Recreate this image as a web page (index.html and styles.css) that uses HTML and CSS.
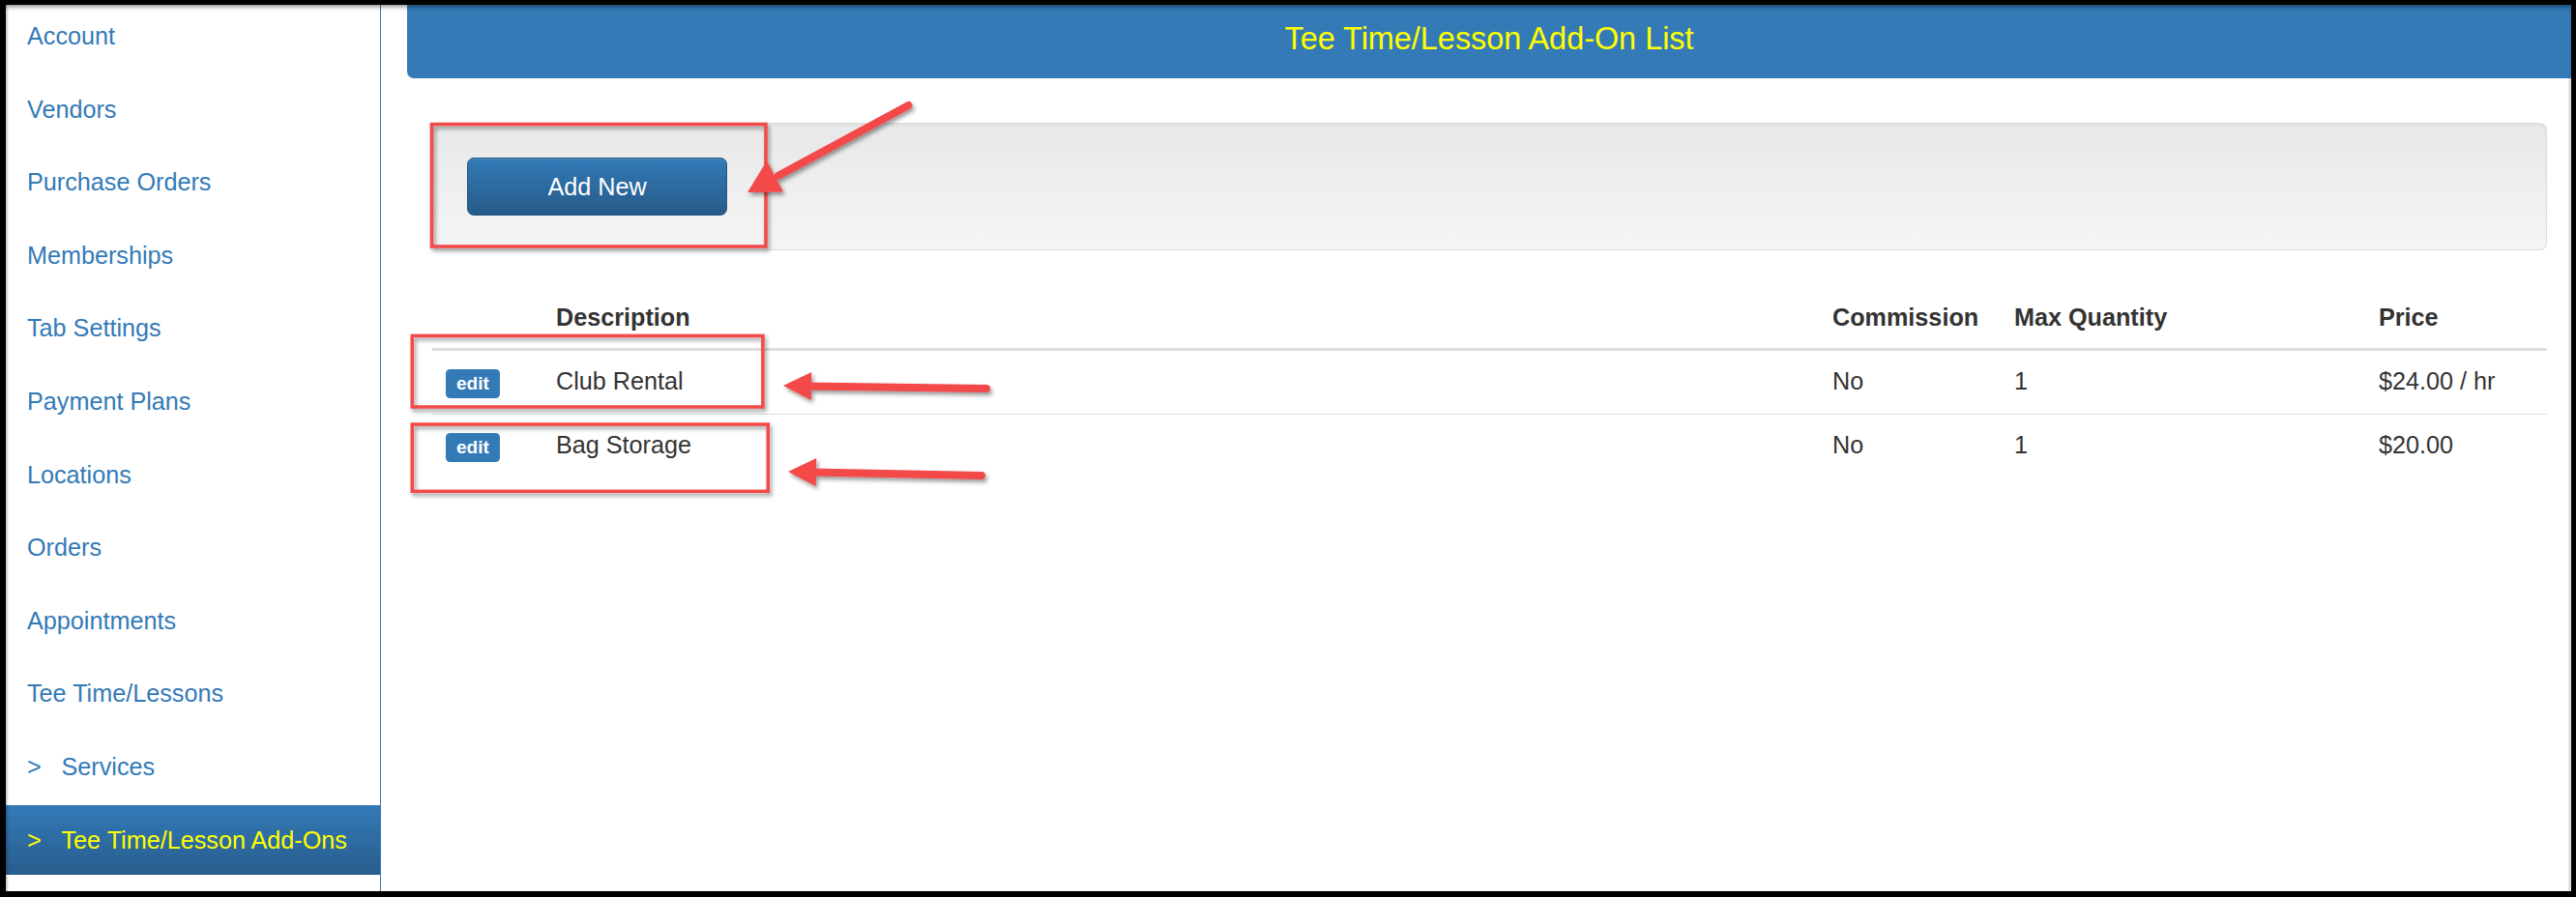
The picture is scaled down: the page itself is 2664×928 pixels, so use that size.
FILE: index.html
```html
<!DOCTYPE html>
<html lang="en">
<head>
 <meta charset="UTF-8" />
 <title>Tee Time/Lesson Add-On List</title>
 <link rel="stylesheet" href="styles.css">
</head>
<body>
 <div class="screen">
   <div class="sidebar">
     <ul class="nav">
       <li><a href="#">Account</a></li>
       <li><a href="#">Vendors</a></li>
       <li><a href="#">Purchase Orders</a></li>
       <li><a href="#">Memberships</a></li>
       <li><a href="#">Tab Settings</a></li>
       <li><a href="#">Payment Plans</a></li>
       <li><a href="#">Locations</a></li>
       <li><a href="#">Orders</a></li>
       <li><a href="#">Appointments</a></li>
       <li><a href="#">Tee Time/Lessons</a></li>
       <li><a href="#"><span class="caret">&gt;</span>Services</a></li>
       <li class="active"><a href="#"><span class="caret">&gt;</span>Tee Time/Lesson Add-Ons</a></li>
     </ul>
   </div>

   <div class="main">
     <div class="page-header">Tee Time/Lesson Add-On List</div>

     <div class="content">
       <div class="well">
         <button class="btn-primary">Add New</button>
       </div>

       <table class="addons">
         <colgroup>
           <col class="c-edit">
           <col class="c-desc">
           <col class="c-comm">
           <col class="c-qty">
           <col class="c-price">
         </colgroup>
         <thead>
           <tr>
             <th></th>
             <th>Description</th>
             <th>Commission</th>
             <th>Max Quantity</th>
             <th>Price</th>
           </tr>
         </thead>
         <tbody>
           <tr>
             <td><span class="label">edit</span></td>
             <td>Club Rental</td>
             <td>No</td>
             <td>1</td>
             <td>$24.00 / hr</td>
           </tr>
           <tr>
             <td><span class="label">edit</span></td>
             <td>Bag Storage</td>
             <td>No</td>
             <td>1</td>
             <td>$20.00</td>
           </tr>
         </tbody>
       </table>
     </div>
   </div>

   <div class="shade"></div>
 </div>

 <!-- annotation marks drawn on top of the screenshot -->
 <svg class="marks" width="2664" height="928" viewBox="0 0 2664 928">
   <defs>
     <filter id="drop" x="-20%" y="-20%" width="140%" height="140%">
       <feDropShadow dx="2" dy="3" stdDeviation="2.2" flood-color="#000" flood-opacity="0.4"/>
     </filter>
   </defs>
   <g filter="url(#drop)" fill="none" stroke="#f34848" stroke-width="3.5">
     <rect x="446.5" y="128.5" width="345.5" height="126.5"/>
     <rect x="426.3" y="347.4" width="362.6" height="73.6"/>
     <rect x="426.3" y="439" width="368" height="69.3"/>
   </g>
   <g filter="url(#drop)">
     <line x1="939.5" y1="109" x2="805" y2="181.8" stroke="#f34848" stroke-width="8" stroke-linecap="round"/>
     <polygon points="773,199 810,198.5 793,166.5" fill="#f34848"/>
     <line x1="1020" y1="402" x2="834" y2="399.4" stroke="#f34848" stroke-width="8" stroke-linecap="round"/>
     <polygon points="810,399 839.2,384.9 838.8,413.9" fill="#f34848"/>
     <line x1="1015" y1="492" x2="839" y2="488.5" stroke="#f34848" stroke-width="8" stroke-linecap="round"/>
     <polygon points="815,488 844.3,474.1 843.7,503.1" fill="#f34848"/>
   </g>
 </svg>
</body>
</html>
```

FILE: styles.css
```css
body {
  margin: 0;
  background: #000;
  font-family: 'Liberation Sans', Arial, sans-serif;
  overflow: hidden;
}

.screen {
  position: relative;
  display: flex;
  width: 2664px;
  height: 928px;
  box-sizing: border-box;
  border-style: solid;
  border-color: #000;
  border-width: 5px 5px 6px 6px;
  background: #fff;
  overflow: hidden;
}

.shade {
  position: absolute;
  inset: 0;
  pointer-events: none;
  box-shadow: inset 0 5px 5px -3px rgba(0,0,0,0.45), inset 3px 0 3px -2px rgba(0,0,0,0.3);
}

/* left menu */
.sidebar {
  flex: none;
  width: 388px;
  box-sizing: border-box;
  border-right: 1px solid #337ab7;
  background: #fff;
}

.nav {
  list-style: none;
  margin: -4px 0 0;
  padding: 0;
}

.nav li + li {
  margin-top: 3.6px;
}

.nav a {
  display: block;
  height: 72px;
  line-height: 72px;
  padding-left: 22px;
  font-size: 25.2px;
  color: #337ab7;
  text-decoration: none;
  white-space: nowrap;
}

.nav .caret {
  display: inline-block;
  width: 35.5px;
}

.nav .active a {
  color: #ffff00;
  background: linear-gradient(to bottom, #337ab7 0, #285c8c 100%);
}

/* main column */
.main {
  flex: 1;
  padding-left: 27px;
  box-shadow: inset -3px 0 0 #e6e6e6;
}

.page-header {
  height: 76px;
  line-height: 70px;
  text-align: center;
  font-size: 32.4px;
  color: #ffff00;
  background: #337ab7;
  border-bottom-left-radius: 7px;
}

.content {
  padding: 0 25px 0 26px;
}

.well {
  margin-top: 46px;
  padding: 35px;
  border: 1px solid #dcdcdc;
  border-radius: 7px;
  background: linear-gradient(to bottom, #e8e8e8 0, #f5f5f5 100%);
  box-shadow: inset 0 1px 3px rgba(0,0,0,0.05);
}

.btn-primary {
  display: block;
  width: 269px;
  height: 60px;
  padding: 0;
  font-family: inherit;
  font-size: 25.2px;
  color: #fff;
  background: linear-gradient(to bottom, #337ab7 0, #265a88 100%);
  border: 1px solid #245580;
  border-radius: 7px;
  box-shadow: inset 0 1px 0 rgba(255,255,255,0.15);
  cursor: pointer;
}

.addons {
  width: 100%;
  margin-top: 38px;
  border-collapse: collapse;
  table-layout: fixed;
  font-size: 25.2px;
  color: #333;
}

.c-edit { width: 114px; }
.c-comm { width: 188px; }
.c-qty { width: 377px; }
.c-price { width: 188px; }

.addons th {
  text-align: left;
  font-weight: bold;
  padding: 14px;
  line-height: 35px;
  border-bottom: 3px solid #ddd;
}

.addons td {
  padding: 14px 14px 16px;
  line-height: 35px;
  vertical-align: top;
  white-space: nowrap;
}

.addons tbody tr + tr td {
  border-top: 1px solid #ddd;
  padding-bottom: 14px;
}

.label {
  display: inline-block;
  padding: 5px 11px 6px;
  line-height: 19px;
  font-size: 19px;
  font-weight: bold;
  color: #fff;
  background: #337ab7;
  border-radius: 4.5px;
  vertical-align: baseline;
}

.marks {
  position: absolute;
  top: 0;
  left: 0;
  pointer-events: none;
}
```
